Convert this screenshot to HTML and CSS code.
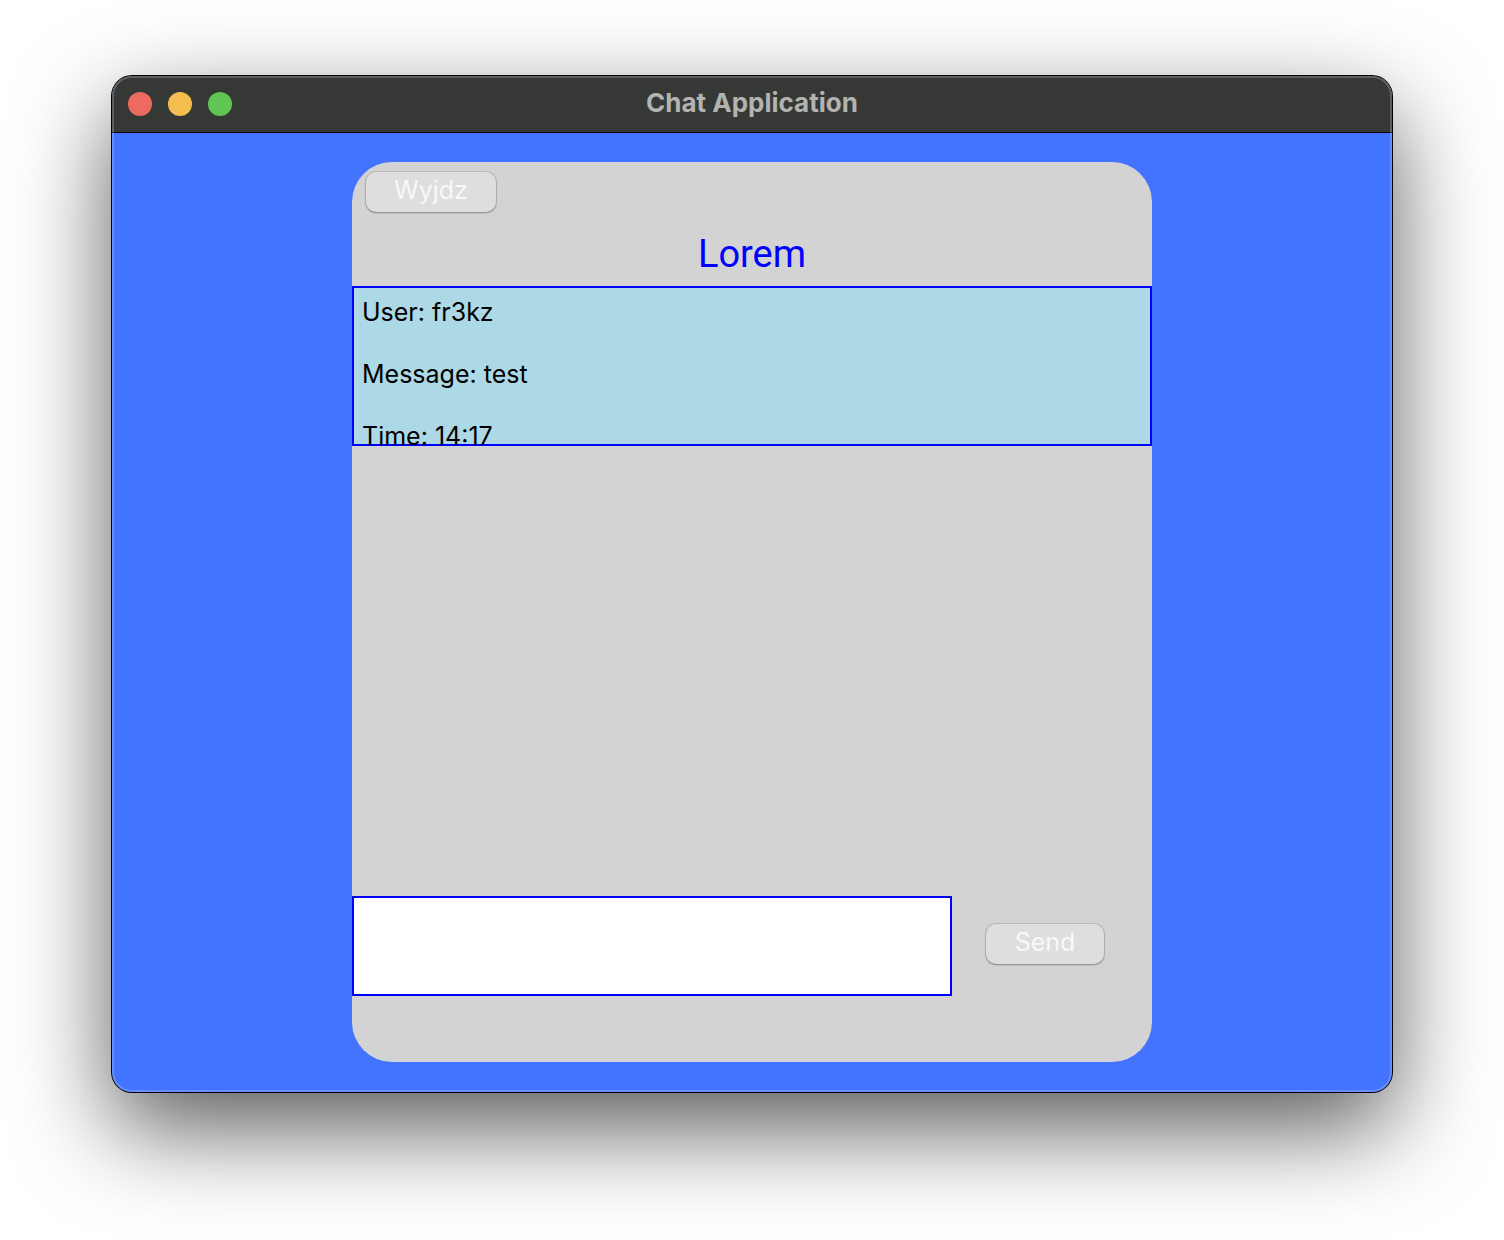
FILE: index.html
```html
<!DOCTYPE html>
<html lang="en">
<head>
<meta charset="utf-8">
<meta name="viewport" content="width=device-width, initial-scale=1">
<title>Chat Application</title>
<link rel="stylesheet" href="styles.css">
</head>
<body>
<div class="window">
  <header class="titlebar">
    <div class="controls">
      <button class="control close" type="button" aria-label="Close"></button>
      <button class="control minimize" type="button" aria-label="Minimize"></button>
      <button class="control maximize" type="button" aria-label="Maximize"></button>
    </div>
    <h1 class="window-title">Chat Application</h1>
  </header>
  <main class="content">
    <section class="card">
      <div class="toolbar"><button class="btn btn-exit" type="button">Wyjdz</button></div>
      <h2 class="room">Lorem</h2>
      <div class="messages">
        <article class="message">
          <p>User: fr3kz</p>
          <p>Message: test</p>
          <p>Time: 14:17</p>
        </article>
      </div>
      <form class="composer">
        <input class="entry" type="text" aria-label="Message">
        <button class="btn btn-send" type="button">Send</button>
      </form>
    </section>
  </main>
</div>
</body>
</html>
```
FILE: styles.css
```css
* {
  box-sizing: border-box;
}

body {
  margin: 0;
  min-height: 100vh;
  padding: 76px 112px 148px;
  display: flex;
  background: #fff;
  font-family: Inter, "Liberation Sans", sans-serif;
  overflow-x: hidden;
}

h1, h2, p {
  margin: 0;
}

.window {
  position: relative;
  flex: 1;
  display: flex;
  flex-direction: column;
  border-radius: 20px;
  background: #4374ff;
  box-shadow: 0 0 0 1px #000, 0 36px 96px rgba(0, 0, 0, 0.65);
}

/* light rim drawn over the title bar and the content */
.window::after {
  content: "";
  position: absolute;
  inset: 0;
  border-radius: 20px;
  box-shadow: inset 0 0 0 2px rgba(255, 255, 255, 0.2);
  pointer-events: none;
}

.titlebar {
  display: grid;
  grid-template-columns: 1fr auto 1fr;
  align-items: center;
  height: 57px;
  padding: 0 16px;
  border-bottom: 1px solid #000;
  border-radius: 20px 20px 0 0;
  background: #363836;
}

.controls {
  display: flex;
  gap: 16px;
}

.control {
  width: 24px;
  height: 24px;
  padding: 0;
  border: 0;
  border-radius: 50%;
}

.close {
  background: #ed6a5f;
}

.minimize {
  background: #f5bf4f;
}

.maximize {
  background: #61c554;
}

.window-title {
  padding-bottom: 2px;
  color: #b2b4b2;
  font-size: 26px;
  line-height: 32px;
  font-weight: 700;
}

.content {
  flex: 1;
  display: flex;
  justify-content: center;
  padding: 29px 0 30px;
}

.card {
  width: 100%;
  max-width: 800px;
  display: flex;
  flex-direction: column;
  padding-bottom: 66px;
  border-radius: 40px;
  background: #d3d3d3;
}

.toolbar {
  display: flex;
  padding: 10px 14px;
}

.btn {
  height: 40px;
  padding: 0 0 4px;
  border: 0;
  border-radius: 10px;
  background: #dedede;
  box-shadow: 0 0 0 1px rgba(0, 0, 0, 0.1), 0 1px 2px rgba(0, 0, 0, 0.3);
  color: #f8f8f8;
  font: 400 25px/32px Inter, "Liberation Sans", sans-serif;
}

.btn-exit {
  width: 130px;
}

.btn-send {
  width: 118px;
  margin-bottom: 4px;
}

.room {
  padding: 8px 0;
  color: #00f;
  font-family: Roboto, "Liberation Sans", sans-serif;
  font-size: 38px;
  line-height: 48px;
  font-weight: 400;
  text-align: center;
}

.messages {
  flex: 1;
}

.message {
  height: 160px;
  padding: 10px;
  display: flex;
  flex-direction: column;
  gap: 30px;
  overflow: hidden;
  background: #add8e6;
  box-shadow: inset 0 0 0 2px #00f;
  color: #000;
  font-size: 25px;
  line-height: 32px;
}

.message p {
  flex: none;
}

.composer {
  display: flex;
  align-items: center;
  gap: 34px;
}

.entry {
  width: 75%;
  height: 100px;
  padding: 10px;
  border: 2px solid #00f;
  border-radius: 0;
  background: #fff;
  font: 400 25px/32px Inter, "Liberation Sans", sans-serif;
}
```
